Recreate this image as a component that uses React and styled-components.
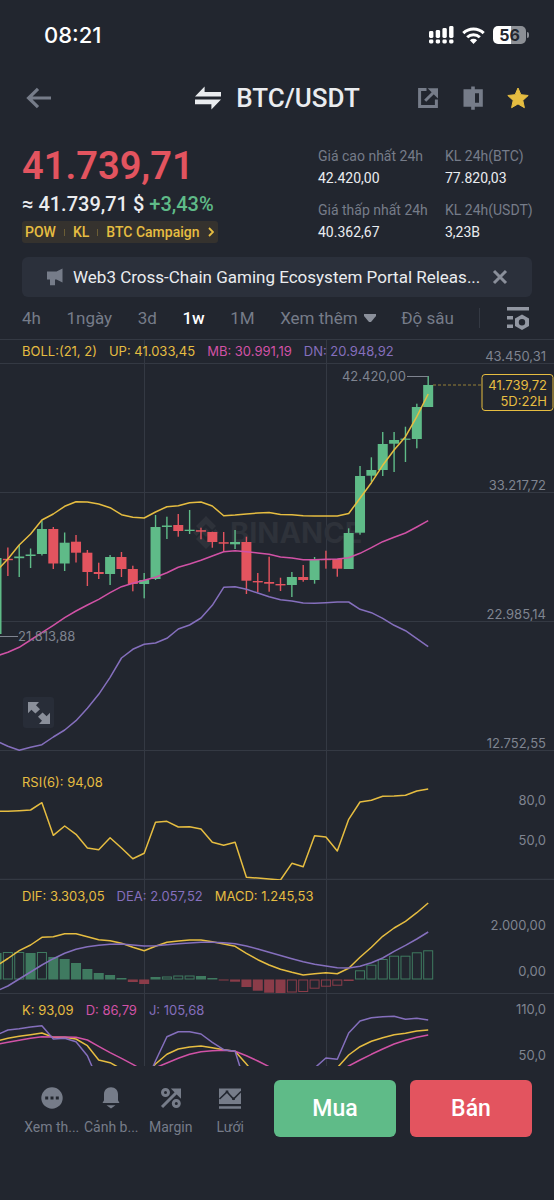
import { useState } from "react"
import styled, { createGlobalStyle } from "styled-components"

const colors = {
  background: "#22262f",
  panel: "#2b303b",
  grid: "#343943",
  text: "#eaecef",
  muted: "#767c89",
  axis: "#7f8490",
  yellow: "#e6bd41",
  pink: "#d152a6",
  purple: "#856fbd",
  green: "#5fbb88",
  red: "#e3545f",
  barGreen: "#3f7a60",
  barRed: "#8b3c49",
}

// every pane shares the same horizontal step, so the candles line up with the indicators
const STEP = 11.36
const x = (index) => index * STEP - 3.5
const toPoints = (values) => values.map((value, index) => `${x(index).toFixed(1)},${value}`).join(" ")

// [high, low, top, bottom, rising]
const candles = [
  [558, 636, 558, 634, 1], [547.5, 576, 558.8, 560.2, 0], [545, 577, 556.5, 558.2, 1],
  [548.5, 568, 554.5, 556, 1], [520.5, 555.5, 529, 554, 1], [527, 569, 529, 563.5, 0],
  [532.5, 571, 542.7, 563.5, 1], [535, 562.5, 541.7, 552.7, 0], [550, 586, 552.7, 572, 0],
  [562.7, 579, 572, 574, 0], [555, 585, 557, 574, 1], [552, 577, 557, 569, 0],
  [565.7, 591.3, 569, 584, 0], [573, 598.3, 580, 584, 1], [515, 580, 527, 579, 1],
  [516.7, 539, 525.5, 527, 1], [514, 536.7, 525, 531, 0], [510, 534, 529.7, 531, 1],
  [527.7, 539.3, 530.2, 531.7, 0], [531.7, 547.7, 532, 542, 0], [532, 551, 542.2, 543.7, 0],
  [530, 549, 542, 544.3, 1], [536.7, 594, 542, 580.7, 0], [573, 592, 581, 582.4, 0],
  [556.7, 591.7, 582, 583.7, 0], [577.7, 591, 584, 585.4, 0], [572, 597, 577, 585, 1],
  [565, 581.7, 577, 580, 0], [557, 583.7, 559.3, 580, 1], [550.7, 568.7, 559, 560.2, 0],
  [559, 576.7, 559, 568.7, 0], [528.3, 569, 533, 569, 1], [466, 534.7, 476, 532.7, 1],
  [457.3, 481.7, 470, 475.7, 1], [432, 476, 444, 470, 1], [432, 472, 440, 443.7, 1],
  [426.7, 462, 438.6, 439.8, 1], [403.7, 448.3, 407, 439, 1], [376, 407, 385, 407, 1],
]

const bollUp = [
  571, 559, 545, 534, 520, 514, 506.3, 501.7, 502, 504, 507.7, 514.7, 517.3, 518, 512, 506.7, 505.7, 502.7, 502, 506,
  515.7, 515, 514, 513, 512.5, 514.5, 514.7, 515.7, 516, 516, 516, 513.5, 498.3, 482.7, 465.3, 450, 436.7, 416.7, 394,
]
const bollMiddle = [
  656, 652.3, 647.3, 640, 632.7, 625.3, 617.7, 611, 605, 599.3, 592.7, 586.7, 583.3, 580.3, 577.3, 572.7, 567.3, 564,
  560.3, 556, 551.7, 550.7, 551.7, 553, 554.3, 557, 558, 559.7, 559.7, 559.3, 559, 557.7, 553.3, 547.7, 541.7, 537.3,
  533, 527, 520.7,
]
const bollDown = [
  741, 746.3, 750.3, 747.3, 744.7, 737, 730, 720.7, 708.3, 694.3, 677.3, 658, 649.3, 644.3, 643, 638.3, 629, 625, 618,
  605.3, 587.3, 586.7, 589.3, 593, 596.7, 599.7, 601, 603, 603.3, 602.7, 602, 602, 609.3, 612.7, 618.3, 625.3, 630.7,
  638.7, 646.7,
]
const rsi = [
  811.3, 811.2, 810.7, 810, 802.7, 835.3, 826, 834.3, 848, 849.7, 837.7, 848, 858.7, 853.3, 822.3, 821.3, 827, 826.7,
  829, 842.3, 845.3, 842.3, 877.3, 878, 879, 880, 863.3, 866.7, 835.7, 837, 851, 819.3, 802, 800.3, 796.3, 796, 795.3,
  791, 789,
]
const dif = [
  966, 958.5, 950.7, 945, 937.3, 936.7, 933.7, 933.7, 936.7, 939.7, 940.7, 943.3, 947.3, 950.7, 946.3, 942.3, 941, 940,
  940, 941.7, 944, 946.3, 953.3, 959.7, 965, 969.3, 972.3, 975, 973.7, 972.7, 973.7, 968.3, 957.3, 947.3, 936.3, 928,
  921.3, 912.7, 903,
]
const dea = [
  991, 986, 979, 972, 965, 958.7, 953.3, 949.3, 946.7, 945.3, 944.3, 944, 945, 946, 945.7, 944.7, 943.7, 943, 942.3,
  942.3, 942.7, 943.7, 946, 949, 952.3, 955.5, 958.7, 961.7, 964.3, 966, 967.7, 968, 966.3, 962.7, 958, 951.3, 945.3,
  939, 932,
]
// [end of the bar, hollow]
const macd = [
  [953, 0], [952, 1], [952, 1], [953, 0], [952, 1], [957, 0], [959, 0], [963, 0], [969, 0], [973, 0], [975, 0],
  [978, 0], [982, 0], [984, 0], [977, 0], [976.5, 1], [975.5, 1], [975.5, 1], [976, 0], [978, 0], [980.5, 0],
  [981.7, 0], [987, 0], [990.7, 0], [992.7, 0], [993, 0], [992.5, 1], [992, 1], [988.7, 1], [986.7, 1], [985.7, 1],
  [981, 0], [970.3, 1], [964.7, 1], [959, 1], [955.7, 1], [955.7, 1], [952.3, 1], [950.3, 1],
]
const BASELINE = 979.5
const kLine = [
  1041, 1038.3, 1036.3, 1034.7, 1033, 1037.3, 1037.3, 1039, 1045.7, 1060, 1062.7, 1069, 1076, 1076, 1064, 1054.3, 1049,
  1047, 1046, 1047.7, 1049.7, 1051.3, 1064, 1078, 1090, 1090, 1090, 1090, 1090, 1080, 1067.7, 1055, 1046.7, 1041.3,
  1037.7, 1034.7, 1033.3, 1031, 1030,
]
const dLine = [
  1044.5, 1042.3, 1040.3, 1038.3, 1036.7, 1037, 1037, 1037.3, 1040, 1046.3, 1052.7, 1058.3, 1064.3, 1071, 1067.7, 1063,
  1058.3, 1054.3, 1051.7, 1050.7, 1050.3, 1051.3, 1055.7, 1061, 1066.7, 1075, 1080, 1080, 1080, 1078, 1072, 1066, 1060,
  1054.3, 1049, 1044, 1040.3, 1037.3, 1035,
]
const jLine = [
  1035, 1030, 1028.7, 1027, 1025.7, 1039, 1038.3, 1041.7, 1055.7, 1082, 1090, 1090, 1090, 1088, 1061, 1036.7, 1031.7,
  1031.7, 1034, 1042.3, 1049.7, 1051.3, 1087, 1090, 1090, 1090, 1090, 1090, 1068, 1058, 1059.3, 1033, 1021, 1017.7,
  1016.7, 1016.3, 1019.3, 1018.3, 1020,
]

const stats = [
  { label: "Giá cao nhất 24h", value: "42.420,00" },
  { label: "KL 24h(BTC)", value: "77.820,03" },
  { label: "Giá thấp nhất 24h", value: "40.362,67" },
  { label: "KL 24h(USDT)", value: "3,23B" },
]
const intervals = ["4h", "1ngày", "3d", "1w", "1M"]

const Signal = () => (
  <svg width="25" height="18" viewBox="0 0 25 18" fill="#fff">
    {[5, 4, 2, 0].map((top, index) => (
      <rect key={top} x={index * 6.7} y={top} width="4.4" height={12 - top} rx="1.4" />
    ))}
    {[0, 1, 2, 3].map((index) => (
      <rect key={index} x={index * 6.7} y="13.5" width="4.4" height="4" rx="1.4" />
    ))}
  </svg>
)

const Wifi = () => (
  <svg width="23" height="17" viewBox="0 0 23 17" fill="none" stroke="#fff" strokeWidth="3">
    <path d="M1.3 6.1a14.6 14.6 0 0 1 20.4 0" />
    <path d="M5.2 10.2a9 9 0 0 1 12.6 0" />
    <path d="M11.5 17 7.9 13.3a5.2 5.2 0 0 1 7.2 0z" fill="#fff" stroke="none" />
  </svg>
)

const BackIcon = () => (
  <svg width="28" height="24" viewBox="0 0 28 24" fill="none" stroke={colors.muted} strokeWidth="3.2">
    <path d="M4 12h23M14 2.8 4.6 12l9.4 9.2" />
  </svg>
)

const SwapIcon = () => (
  <svg width="28" height="24" viewBox="0 0 28 24" fill={colors.text}>
    <path d="M1 10.4 10.6.6v5.4H27v4.4zM27 13.6 17.4 23.6v-5.4H1v-4.6z" />
  </svg>
)

const ShareIcon = () => (
  <svg width="24" height="24" viewBox="0 0 24 24" fill="none" stroke={colors.muted} strokeWidth="3">
    <path d="M10.5 3.6H3.6v16.8h16.8v-6.9" />
    <path d="M9.2 14.8 17.5 6.5" />
    <path d="M11.6 2.2H22v10.4z" fill={colors.muted} stroke="none" />
  </svg>
)

const CompareIcon = () => (
  <svg width="24" height="24" viewBox="0 0 24 24" fill={colors.muted}>
    <path d="M2.5 3.3h7.7V.5h3.6v2.8h8v17.5h-8v3h-3.6v-3H2.5zM14 7.3v9.5h4V7.3z" fillRule="evenodd" />
  </svg>
)

const StarIcon = () => (
  <svg width="24" height="24" viewBox="0 0 24 24" fill={colors.yellow} stroke={colors.yellow} strokeLinejoin="round">
    <path d="m12 2 2.9 6.7 7.3.8-5.4 4.9 1.6 7.3L12 17.9l-6.4 3.8 1.6-7.3-5.4-4.9 7.3-.8z" />
  </svg>
)

const MegaphoneIcon = () => (
  <svg width="18" height="18" viewBox="0 0 18 18" fill={colors.muted}>
    <path d="M1 3.5h9.5L16.5.5v14l-6-3H9v5.8H4v-5.8H1z" />
  </svg>
)

const CloseIcon = () => (
  <svg width="16" height="16" viewBox="0 0 16 16" stroke="#8a8f9a" strokeWidth="3">
    <path d="m2 2 12 12M14 2 2 14" />
  </svg>
)

const SettingsIcon = () => (
  <svg width="24" height="24" viewBox="0 0 24 24" fill="#9297a2">
    <path d="M1 1h22v3.5H1zM1 10h6v3.5H1zM1 18.5h6V22H1z" />
    <path d="m16 8.5 7 4v7.5l-7 4-7-4v-7.5zM16 13a3.2 3.2 0 1 0 0 6.4 3.2 3.2 0 0 0 0-6.4z" fillRule="evenodd" />
  </svg>
)

const ExpandIcon = () => (
  <svg width="24" height="24" viewBox="0 0 24 24" fill="#8a8f9a">
    <path d="M1 1h11L9 4.200l4 4L8.400 12.600 4.400 8.800 1 12.200zM23 23H12l3-3.200-4-4 4.600-4.400 4 3.800 3.400-3.400z" />
  </svg>
)

const MoreIcon = () => (
  <svg width="24" height="24" viewBox="0 0 24 24">
    <circle cx="12" cy="12" r="10.7" fill={colors.muted} />
    <path d="M5.2 10.5h3v3h-3zM10.5 10.5h3v3h-3zM15.8 10.5h3v3h-3z" fill={colors.background} />
  </svg>
)

const BellIcon = () => (
  <svg width="24" height="24" viewBox="0 0 24 24" fill={colors.muted}>
    <path d="M12 1.2c4.3 0 7 3 7 7v6l1.500 2.800H3.500L5 14.200v-6c0-4 2.700-7 7-7zM7.500 19.200h9L12 22.600z" />
  </svg>
)

const PercentIcon = () => (
  <svg width="24" height="24" viewBox="0 0 24 24" fill="none" stroke={colors.muted} strokeWidth="3">
    <circle cx="6.5" cy="6.5" r="3" />
    <circle cx="17.3" cy="17.5" r="3" />
    <path d="M3 21 18 6" />
    <path d="M11.8 2.5H22v10.2z" fill={colors.muted} stroke="none" />
  </svg>
)

const GridIcon = () => (
  <svg width="24" height="24" viewBox="0 0 24 24">
    <path d="M1 2.5h22V18H1zM1 20.2h22v2.5H1z" fill={colors.muted} />
    <path d="m1.5 13 7.5-7 6.5 7L23 5.5" fill="none" stroke={colors.background} strokeWidth="1.6" />
    <path d="M7.7 4.5h2.6v2.6H7.7zM14.2 11.5h2.6v2.6h-2.6z" fill={colors.background} />
  </svg>
)

const shortcuts = [
  { label: "Xem th...", icon: <MoreIcon /> },
  { label: "Cảnh b...", icon: <BellIcon /> },
  { label: "Margin", icon: <PercentIcon /> },
  { label: "Lưới", icon: <GridIcon /> },
]

const Pane = ({ top, height, legend, legendTop, children, label }) => (
  <PaneWrapper>
    <Plot viewBox={`0 ${top} 554 ${height}`} role="img" aria-label={label}>
      <path d={`M144.5 ${top}v${height}M326.5 ${top}v${height}`} stroke={colors.grid} />
      {children}
    </Plot>
    <Legend $top={legendTop}>
      {legend.map(([text, color]) => (
        <LegendItem key={text} $color={color}>{text}</LegendItem>
      ))}
    </Legend>
  </PaneWrapper>
)

const Line = ({ values, color }) => (
  <polyline points={toPoints(values)} fill="none" stroke={color} strokeWidth="1.5" strokeLinejoin="round" />
)

const PricePane = () => (
  <Pane
    top={340}
    height={411}
    label="BTC/USDT"
    legendTop={3}
    legend={[
      ["BOLL:(21, 2)", colors.yellow],
      ["UP: 41.033,45", colors.yellow],
      ["MB: 30.991,19", colors.pink],
      ["DN: 20.948,92", colors.purple],
    ]}
  >
    <path d="M0 363.5h554M0 492.5h554M0 621.5h554M0 750.5h554" stroke={colors.grid} />
    <g fill="#2e323a">
      <path d="m206 516 10 10-4 4-6-6-6 6-4-4zM206 549l-10-10 4-4 6 6 6-6 4 4zM206 528l4.5 4.5-4.5 4.5-4.5-4.5zM193 532.5l3.5-3.5 3.5 3.5-3.5 3.5zM212 532.5l3.5-3.5 3.5 3.5-3.5 3.5z" />
      <Watermark x="230" y="543">BINANCE</Watermark>
    </g>
    {candles.map(([high, low, top, bottom, rising], index) => (
      <g key={index} fill={rising ? colors.green : colors.red}>
        <rect x={x(index) - 0.7} y={high} width="1.4" height={low - high} />
        <rect x={x(index) - 5} y={top} width="10" height={bottom - top} />
      </g>
    ))}
    <Line values={bollUp} color={colors.yellow} />
    <Line values={bollMiddle} color={colors.pink} />
    <Line values={bollDown} color={colors.purple} />
    <path d="M0 636.5h18M407 376.5h21" stroke={colors.axis} />
    <AxisText x="18" y="641" $start>21.813,88</AxisText>
    <AxisText x="406" y="381">42.420,00</AxisText>
    <path d="M433 385h49" stroke={colors.yellow} strokeDasharray="3 2" opacity="0.6" />
    <AxisText x="546" y="361">43.450,31</AxisText>
    <AxisText x="546" y="490">33.217,72</AxisText>
    <AxisText x="546" y="619">22.985,14</AxisText>
    <AxisText x="546" y="748">12.752,55</AxisText>
    <rect x="482" y="374.5" width="71" height="36" rx="3" fill={colors.background} stroke={colors.yellow} />
    <AxisText x="547" y="390" $color={colors.yellow}>41.739,72</AxisText>
    <AxisText x="547" y="406" $color={colors.yellow}>5D:22H</AxisText>
  </Pane>
)

const RsiPane = () => (
  <Pane top={751} height={129} label="RSI" legendTop={23} legend={[["RSI(6): 94,08", colors.yellow]]}>
    <path d="M0 879.5h554" stroke={colors.grid} strokeWidth="1.5" />
    <Line values={rsi} color={colors.yellow} />
    <AxisText x="546" y="805">80,0</AxisText>
    <AxisText x="546" y="845">50,0</AxisText>
  </Pane>
)

const MacdPane = () => (
  <Pane
    top={880}
    height={114}
    label="MACD"
    legendTop={8}
    legend={[
      ["DIF: 3.303,05", colors.yellow],
      ["DEA: 2.057,52", colors.purple],
      ["MACD: 1.245,53", colors.yellow],
    ]}
  >
    <path d="M0 993.5h554" stroke={colors.grid} />
    {macd.map(([end, hollow], index) => {
      const color = end < BASELINE ? colors.barGreen : colors.barRed
      const inset = hollow ? 0.5 : 0
      return (
        <rect
          key={index}
          x={x(index) - 5 + inset}
          y={Math.min(end, BASELINE) + inset}
          width={10 - inset * 2}
          height={Math.max(Math.abs(end - BASELINE) - inset * 2, 1)}
          fill={hollow ? "none" : color}
          stroke={hollow ? color : "none"}
        />
      )
    })}
    <Line values={dif} color={colors.yellow} />
    <Line values={dea} color={colors.purple} />
    <AxisText x="546" y="930">2.000,00</AxisText>
    <AxisText x="546" y="976">0,00</AxisText>
  </Pane>
)

const KdjPane = () => (
  <Pane
    top={994}
    height={72}
    label="KDJ"
    legendTop={8}
    legend={[
      ["K: 93,09", colors.yellow],
      ["D: 86,79", colors.pink],
      ["J: 105,68", colors.purple],
    ]}
  >
    <Line values={kLine} color={colors.yellow} />
    <Line values={dLine} color={colors.pink} />
    <Line values={jLine} color={colors.purple} />
    <AxisText x="546" y="1014">110,0</AxisText>
    <AxisText x="546" y="1060">50,0</AxisText>
  </Pane>
)

const App = () => {
  const [selected, setSelected] = useState("1w")
  return (
    <>
      <GlobalStyle />
      <Page>
        <StatusBar>
          <Clock>08:21</Clock>
          <StatusIcons>
            <Signal />
            <Wifi />
            <Battery>56</Battery>
          </StatusIcons>
        </StatusBar>
        <NavBar>
          <IconButton aria-label="Back"><BackIcon /></IconButton>
          <Pair><SwapIcon />BTC/USDT</Pair>
          <NavActions>
            <IconButton aria-label="Share"><ShareIcon /></IconButton>
            <IconButton aria-label="Compare"><CompareIcon /></IconButton>
            <IconButton aria-label="Favorite"><StarIcon /></IconButton>
          </NavActions>
        </NavBar>
        <Ticker>
          <div>
            <Price>41.739,71</Price>
            <Fiat>≈ 41.739,71 $ <Change>+3,43%</Change></Fiat>
            <Tags href="#campaign">
              <span>POW</span>
              <TagDivider />
              <span>KL</span>
              <TagDivider />
              <span>BTC Campaign</span>
              <svg width="6" height="10" viewBox="0 0 6 10" fill="none" stroke={colors.yellow} strokeWidth="1.8">
                <path d="m1 1 4 4-4 4" />
              </svg>
            </Tags>
          </div>
          <Stats>
            {stats.map(({ label, value }) => (
              <div key={label}>
                <StatLabel>{label}</StatLabel>
                <StatValue>{value}</StatValue>
              </div>
            ))}
          </Stats>
        </Ticker>
        <Banner>
          <MegaphoneIcon />
          <BannerText>Web3 Cross-Chain Gaming Ecosystem Portal Releas...</BannerText>
          <IconButton aria-label="Close"><CloseIcon /></IconButton>
        </Banner>
        <Intervals>
          {intervals.map((item) => (
            <Interval key={item} $active={item === selected} onClick={() => setSelected(item)}>{item}</Interval>
          ))}
          <Interval>
            Xem thêm
            <svg width="12" height="8" viewBox="0 0 12 8" fill="#8a8f9a"><path d="M0 0h12v2L7 8H5L0 2z" /></svg>
          </Interval>
          <Interval>Độ sâu</Interval>
          <IntervalDivider />
          <IconButton aria-label="Settings"><SettingsIcon /></IconButton>
        </Intervals>
        <Charts>
          <PricePane />
          <RsiPane />
          <MacdPane />
          <KdjPane />
          <ExpandButton aria-label="Expand"><ExpandIcon /></ExpandButton>
        </Charts>
        <Footer>
          <Shortcuts>
            {shortcuts.map(({ label, icon }) => (
              <Shortcut key={label}>{icon}{label}</Shortcut>
            ))}
          </Shortcuts>
          <TradeButton $color={colors.green}>Mua</TradeButton>
          <TradeButton $color={colors.red}>Bán</TradeButton>
        </Footer>
      </Page>
    </>
  )
}

const GlobalStyle = createGlobalStyle`
  * {
    box-sizing: border-box;
  }
  body {
    margin: 0;
    background-color: ${colors.background};
    color: ${colors.text};
    font-family: Roboto, "Noto Sans", sans-serif;
  }
  svg {
    flex-shrink: 0;
  }
  button {
    border: none;
    background: none;
    padding: 0;
    font-family: inherit;
    cursor: pointer;
  }
`
const Page = styled.main`
  min-height: 100vh;
  background-color: ${colors.background};
`
const StatusBar = styled.div`
  height: 70px;
  padding: 0 24px 0 44px;
  display: flex;
  align-items: center;
  justify-content: space-between;
`
const Clock = styled.span`
  color: #fff;
  font-family: Inter, sans-serif;
  font-size: 22px;
  font-weight: 500;
`
const StatusIcons = styled.div`
  display: flex;
  align-items: center;
  gap: 8px;
`
const Battery = styled.span`
  width: 33px;
  height: 18px;
  margin-right: 4px;
  border-radius: 5px;
  position: relative;
  background: linear-gradient(90deg, #fff 56%, #8d9096 56%);
  color: ${colors.background};
  font-family: Inter, sans-serif;
  font-size: 16px;
  font-weight: 700;
  line-height: 18px;
  text-align: center;
  &::after {
    content: "";
    width: 2px;
    height: 6px;
    border-radius: 0 2px 2px 0;
    position: absolute;
    top: 6px;
    right: -3px;
    background-color: #8d9096;
  }
`
const NavBar = styled.header`
  height: 56px;
  padding: 0 24px;
  display: grid;
  grid-template-columns: 1fr auto 1fr;
  align-items: center;
`
const IconButton = styled.button`
  display: flex;
  align-items: center;
`
const Pair = styled.h1`
  margin: 0;
  display: flex;
  align-items: center;
  gap: 14px;
  font-size: 26px;
  font-weight: 500;
`
const NavActions = styled.div`
  display: flex;
  justify-content: flex-end;
  gap: 21px;
`
const Ticker = styled.section`
  padding: 19px 22px 14px;
  display: flex;
  justify-content: space-between;
`
const Price = styled.div`
  color: ${colors.red};
  font-size: 38px;
  font-weight: 600;
  line-height: 42px;
`
const Fiat = styled.div`
  font-size: 20px;
  font-weight: 500;
  line-height: 34px;
`
const Change = styled.span`
  color: ${colors.green};
`
const Tags = styled.a`
  width: fit-content;
  height: 22px;
  padding: 0 4px 0 3px;
  border-radius: 3px;
  display: flex;
  align-items: center;
  gap: 8px;
  background-color: #35322e;
  color: ${colors.yellow};
  font-size: 14px;
  font-weight: 500;
  text-decoration: none;
`
const TagDivider = styled.span`
  width: 1px;
  height: 7px;
  background-color: #6b5d35;
`
const Stats = styled.div`
  display: grid;
  grid-template-columns: 127px 87px;
  row-gap: 10px;
  font-size: 14px;
  line-height: 22px;
  white-space: nowrap;
`
const StatLabel = styled.div`
  color: ${colors.muted};
`
const StatValue = styled.div`
  color: ${colors.text};
`
const Banner = styled.section`
  height: 40px;
  margin: 0 22px;
  padding: 0 24px;
  border-radius: 6px;
  display: flex;
  align-items: center;
  gap: 9px;
  background-color: ${colors.panel};
`
const BannerText = styled.span`
  flex: 1;
  font-size: 17px;
  white-space: nowrap;
`
const Intervals = styled.nav`
  height: 43px;
  padding: 0 24px 0 22px;
  border-bottom: 1px solid ${colors.grid};
  display: flex;
  align-items: center;
  justify-content: space-between;
`
const Interval = styled.button`
  display: flex;
  align-items: center;
  gap: 6px;
  color: ${props => props.$active ? "#fff" : colors.muted};
  font-size: 17px;
  font-weight: ${props => props.$active ? 500 : 400};
`
const IntervalDivider = styled.span`
  width: 1px;
  height: 20px;
  background-color: ${colors.grid};
`
const Charts = styled.section`
  position: relative;
`
const PaneWrapper = styled.div`
  position: relative;
`
const Plot = styled.svg`
  width: 100%;
  display: block;
  overflow: hidden;
`
const Legend = styled.div`
  position: absolute;
  top: ${props => props.$top}px;
  left: 22px;
  display: flex;
  gap: 12px;
  font-family: Inter, sans-serif;
  font-size: 13px;
  line-height: 16px;
`
const LegendItem = styled.span`
  color: ${props => props.$color};
`
const AxisText = styled.text`
  fill: ${props => props.$color || colors.axis};
  font-family: Inter, sans-serif;
  font-size: 13px;
  text-anchor: ${props => props.$start ? "start" : "end"};
`
const Watermark = styled.text`
  font-family: Inter, sans-serif;
  font-size: 29px;
  font-weight: 700;
`
const ExpandButton = styled.button`
  width: 31px;
  height: 31px;
  border-radius: 3px;
  position: absolute;
  top: 357px;
  left: 23px;
  display: flex;
  align-items: center;
  justify-content: center;
  background-color: #282d38;
`
const Footer = styled.footer`
  padding: 14px 22px 62px;
  display: grid;
  grid-template-columns: 39fr 20fr 20fr;
  gap: 14px;
`
const Shortcuts = styled.div`
  display: grid;
  grid-template-columns: repeat(4, 1fr);
`
const Shortcut = styled.button`
  padding-top: 6px;
  display: flex;
  flex-direction: column;
  align-items: center;
  gap: 8px;
  color: ${colors.muted};
  font-size: 14px;
  line-height: 18px;
  white-space: nowrap;
`
const TradeButton = styled.button`
  height: 57px;
  border-radius: 6px;
  background-color: ${props => props.$color};
  color: #fff;
  font-size: 23px;
  font-weight: 500;
`

export default App
